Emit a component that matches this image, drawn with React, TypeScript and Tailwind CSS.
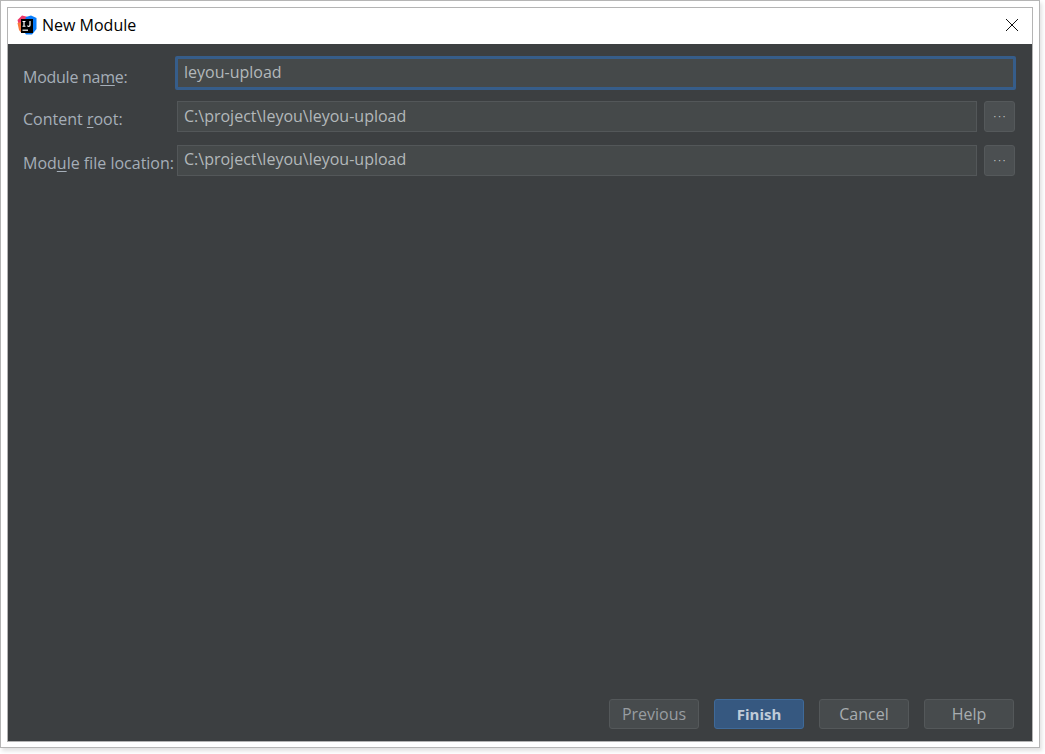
import React from 'react';

const font = "font-['Open_Sans','Noto_Sans',sans-serif]";

const Logo = () => (
  <svg width="20" height="20" viewBox="0 0 20 20" className="shrink-0">
    <path d="M0.5 5 L5 0.5 L11 2 L9 10 L2 11 Z" fill="#ee3a6a" />
    <path d="M9 2 L14 0.5 L19.5 3 L19.5 14 L15 19.5 L9 19.5 L5 14 Z" fill="#087cfa" />
    <path d="M0.5 8 L2 15 L4.5 18 L8 14 L5 7 Z" fill="#f97a3a" />
    <rect x="4" y="4" width="12" height="14" fill="#000" />
    <rect x="5.5" y="14.6" width="5.5" height="1.2" fill="#fff" />
    <path d="M5.5 6 H8.5 V7 H7.6 V10.8 H8.5 V11.8 H5.5 V10.8 H6.4 V7 H5.5 Z" fill="#fff" />
    <path d="M12.4 6 H13.6 V10.2 Q13.6 11.9 11.8 11.9 Q10.6 11.9 10 10.9 L10.8 10.2 Q11.2 10.8 11.8 10.8 Q12.4 10.8 12.4 10 Z" fill="#fff" />
  </svg>
);

const FieldRow = ({ label, value, nudge }: { label: React.ReactNode; value: string; nudge: string }) => (
  <div className="flex h-[31px] items-center">
    <label className="w-[169px] shrink-0 pt-[5px] pl-[15px] text-[16px] whitespace-nowrap text-[#a5aeb8]">{label}</label>
    <div className={`flex h-[31px] w-[800px] items-center border border-[#535759] bg-[#45494a] pl-[6px] text-[16px] text-[#b3b8ba] ${nudge}`}>
      {value}
    </div>
    <button className="ml-[7px] flex h-[31px] w-[31px] items-center justify-center rounded-[3px] border border-[#55595b] bg-[#4b4f51] pl-[2px] text-[10px] tracking-[2px] text-[#c4c7c8]">
      ···
    </button>
  </div>
);

const FooterButton = ({ label, primary, dim }: { label: string; primary?: boolean; dim?: boolean }) => (
  <button
    className={
      primary
        ? 'h-[30px] w-[90px] rounded-[3px] border border-[#3f6a99] bg-[#365880] text-[15px] font-bold text-[#c0ccd9]'
        : `h-[30px] w-[90px] rounded-[3px] border border-[#54585a] bg-[#474b4d] text-[16px] ${dim ? 'text-[#989da1]' : 'text-[#a8adb0]'}`
    }
  >
    {label}
  </button>
);

export default function App() {
  return (
    <div className={`${font} h-[754px] w-[1045px] overflow-hidden bg-white`}>
      <div className="h-[748px] w-[1040px] border border-[#b5b5b5] bg-white pt-[6px] pl-[6px] shadow-[2px_3px_4px_rgba(0,0,0,0.12)]">
        <div className="flex h-[735px] w-[1026px] flex-col border border-[#b4b4b4]">
          <div className="flex h-[36px] shrink-0 items-center bg-white pr-[13px] pb-[2px] pl-[9px]">
            <Logo />
            <span className="ml-[5px] text-[16px] text-black">New Module</span>
            <svg width="14" height="14" viewBox="0 0 14 14" className="ml-auto" stroke="#111" strokeWidth="1" fill="none">
              <path d="M1 1 L13 13 M13 1 L1 13" />
            </svg>
          </div>
          <div className="flex flex-1 flex-col bg-[#3c3f41] pt-[12px]">
            <div className="flex h-[34px] items-center">
              <label className="w-[167px] shrink-0 pt-[7px] pl-[15px] text-[16px] tracking-[-0.25px] text-[#a5aeb8]">
                Module na<span className="underline underline-offset-2">m</span>e:
              </label>
              <div className="flex h-[34px] w-[841px] items-center rounded-[2px] border-[3px] border-[#365d8a] bg-[#45494a] pb-[3px] pl-[6px] text-[16px] text-[#b3b8ba]">
                leyou-upload
              </div>
            </div>
            <div className="mt-[11px] flex flex-col gap-[13px]">
              <FieldRow nudge="pb-[2px]" label={<>Content <span className="underline underline-offset-2">r</span>oot:</>} value="C:\project\leyou\leyou-upload" />
              <FieldRow nudge="pb-[4px]" label={<>Mod<span className="underline underline-offset-2">u</span>le file location:</>} value="C:\project\leyou\leyou-upload" />
            </div>
            <div className="mt-auto flex justify-end gap-[15px] pr-[18px] pb-[12px]">
              <FooterButton label="Previous" dim />
              <FooterButton label="Finish" primary />
              <FooterButton label="Cancel" />
              <FooterButton label="Help" />
            </div>
          </div>
        </div>
      </div>
    </div>
  );
}
